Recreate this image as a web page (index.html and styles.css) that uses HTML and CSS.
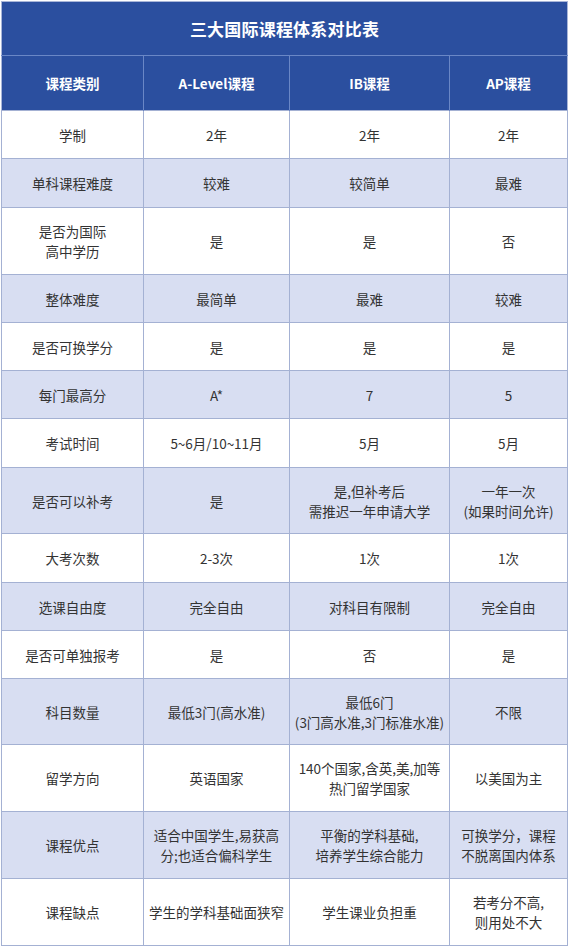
FILE: index.html
```html
<!DOCTYPE html>
<html lang="zh">
<head>
<meta charset="utf-8">
<link rel="stylesheet" href="styles.css">
</head>
<body>
<table class="cmp">
  <colgroup>
    <col class="c1"><col class="c2"><col class="c3"><col class="c4">
  </colgroup>
  <thead>
    <tr class="title"><th colspan="4">三大国际课程体系对比表</th></tr>
    <tr class="head"><th>课程类别</th><th>A-Level课程</th><th>IB课程</th><th>AP课程</th></tr>
  </thead>
  <tbody>
    <tr class="r48"><td>学制</td><td>2年</td><td>2年</td><td>2年</td></tr>
    <tr class="r49 alt"><td>单科课程难度</td><td>较难</td><td>较简单</td><td>最难</td></tr>
    <tr class="r67"><td>是否为国际<br>高中学历</td><td>是</td><td>是</td><td>否</td></tr>
    <tr class="r48 alt"><td>整体难度</td><td>最简单</td><td>最难</td><td>较难</td></tr>
    <tr class="r48"><td>是否可换学分</td><td>是</td><td>是</td><td>是</td></tr>
    <tr class="r48 alt"><td>每门最高分</td><td>A*</td><td>7</td><td>5</td></tr>
    <tr class="r49"><td>考试时间</td><td>5~6月/10~11月</td><td>5月</td><td>5月</td></tr>
    <tr class="r66 alt"><td>是否可以补考</td><td>是</td><td>是,但补考后<br>需推迟一年申请大学</td><td>一年一次<br>(如果时间允许)</td></tr>
    <tr class="r49"><td>大考次数</td><td>2-3次</td><td>1次</td><td>1次</td></tr>
    <tr class="r48 alt"><td>选课自由度</td><td>完全自由</td><td>对科目有限制</td><td>完全自由</td></tr>
    <tr class="r48"><td>是否可单独报考</td><td>是</td><td>否</td><td>是</td></tr>
    <tr class="r66 alt"><td>科目数量</td><td>最低3门(高水准)</td><td>最低6门<br>(3门高水准,3门标准水准)</td><td>不限</td></tr>
    <tr class="r67"><td>留学方向</td><td>英语国家</td><td>140个国家,含英,美,加等<br>热门留学国家</td><td>以美国为主</td></tr>
    <tr class="r67 alt"><td>课程优点</td><td>适合中国学生,易获高<br>分;也适合偏科学生</td><td>平衡的学科基础,<br>培养学生综合能力</td><td>可换学分，课程<br>不脱离国内体系</td></tr>
    <tr class="r67"><td>课程缺点</td><td>学生的学科基础面狭窄</td><td>学生课业负担重</td><td>若考分不高,<br>则用处不大</td></tr>
  </tbody>
</table>
</body>
</html>
```
FILE: styles.css
```css
html, body {
  margin: 0;
  padding: 0;
  background: #ffffff;
}
body {
  padding: 1px 0 0 1px;
  font-family: "Noto Sans CJK SC", "Noto Sans", sans-serif;
}
.cmp {
  border-collapse: collapse;
  table-layout: fixed;
  width: 566px;
  border: 1px solid #a9b6d8;
}
.c1 { width: 142px; }
.c2 { width: 146px; }
.c3 { width: 160px; }
.c4 { width: 118px; }
.cmp th, .cmp td {
  padding: 0 2px;
  text-align: center;
  vertical-align: middle;
}
.title th {
  height: 53px;
  background: #2b4f9f;
  color: #ffffff;
  font-size: 17px;
  font-weight: 700;
  border-bottom: 1px solid #6a87c6;
  letter-spacing: 0.2px;
}
.head th {
  height: 54px;
  background: #2b4f9f;
  color: #ffffff;
  font-size: 13.5px;
  font-weight: 700;
  border-left: 1px solid #6a87c6;
}
.head th:first-child { border-left: none; }
.cmp td {
  font-size: 13.5px;
  line-height: 20px;
  color: #333333;
  border: 1px solid #a4b1d3;
  background: #ffffff;
  white-space: nowrap;
}
.cmp tr.alt td { background: #d8def2; }
.r48 td { height: 47px; }
.r49 td { height: 48px; }
.r66 td { height: 65px; }
.r67 td { height: 66px; }
```
